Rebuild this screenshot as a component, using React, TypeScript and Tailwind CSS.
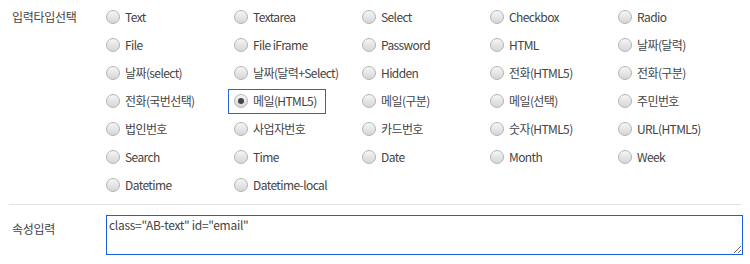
const options = [
  "Text", "Textarea", "Select", "Checkbox", "Radio",
  "File", "File iFrame", "Password", "HTML", "날짜(달력)",
  "날짜(select)", "날짜(달력+Select)", "Hidden", "전화(HTML5)", "전화(구분)",
  "전화(국번선택)", "메일(HTML5)", "메일(구분)", "메일(선택)", "주민번호",
  "법인번호", "사업자번호", "카드번호", "숫자(HTML5)", "URL(HTML5)",
  "Search", "Time", "Date", "Month", "Week",
  "Datetime", "Datetime-local",
];

const selected = "메일(HTML5)";

const Radio = ({ checked }: { checked: boolean }) => (
  <span className="w-[14px] h-[14px] rounded-full border border-[#b4b4b4] bg-gradient-to-b from-[#f6f6f6] to-[#d6d6d6] flex items-center justify-center shrink-0">
    {checked && <span className="w-[6px] h-[6px] rounded-full bg-[#444]" />}
  </span>
);

const App = () => {
  return (
    <div
      className="w-[750px] h-[264px] bg-white text-[12px] text-[#444]"
      style={{ fontFamily: '"Noto Sans CJK KR", "Noto Sans", sans-serif' }}
    >
      <div className="flex pt-[3px]">
        <div className="w-[100px] pl-[12px] h-[28px] flex items-center tracking-[-0.3px]">입력타입선택</div>
        <div className="grid grid-cols-[repeat(5,128px)]">
          {options.map((opt) => {
            const checked = opt === selected;
            return (
              <label key={opt} className="h-[28px] flex items-center">
                <span
                  className={`flex items-center gap-[5px] h-[25px] pl-[5px] pr-[8px] border ${
                    checked ? "border-[#2a63d8]" : "border-transparent"
                  }`}
                >
                  <Radio checked={checked} />
                  <span className="whitespace-nowrap tracking-[-0.6px]">{opt}</span>
                </span>
              </label>
            );
          })}
        </div>
      </div>
      <div className="mx-[9px] mt-[5px] border-t border-[#e2e2e2]" />
      <div className="flex mt-[10px]">
        <div className="w-[106px] pl-[12px] pt-[5px] tracking-[-0.3px]">속성입력</div>
        <textarea
          className="w-[637px] h-[40px] border border-[#1a5ee6] outline-none px-[2px] py-0 text-[12px] text-[#444] resize-y tracking-[-0.3px]"
          defaultValue={'class="AB-text" id="email"'}
          style={{ fontFamily: '"Noto Sans CJK KR", "Noto Sans", sans-serif' }}
        />
      </div>
    </div>
  );
};

export default App;
